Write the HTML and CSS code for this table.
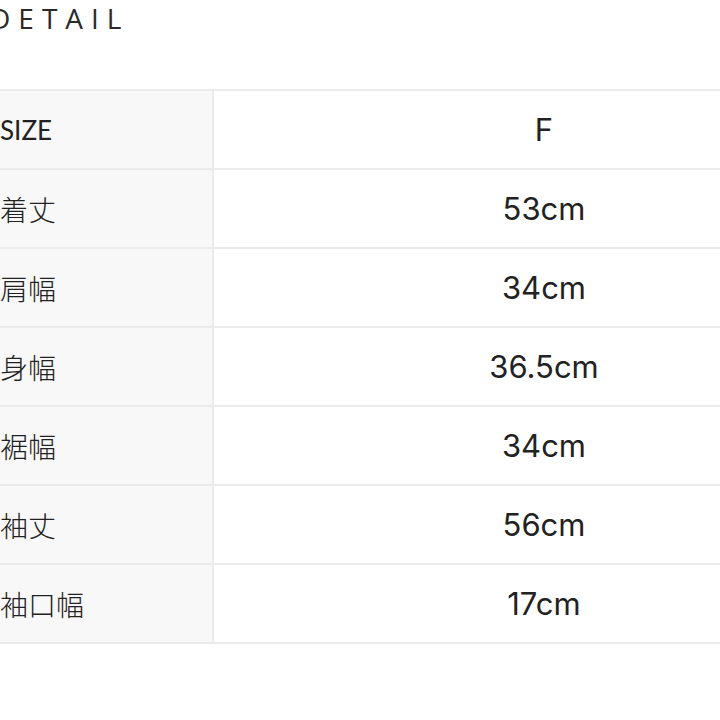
FILE: index.html
```html
<!DOCTYPE html>
<html lang="ja">
<head>
<meta charset="utf-8">
<link rel="stylesheet" href="styles.css">
</head>
<body>
<div class="page">
  <h2 class="title">DETAIL</h2>
  <table class="spec">
    <tbody>
      <tr><th>SIZE</th><td>F</td></tr>
      <tr><th><span class="ja">着丈</span></th><td>53cm</td></tr>
      <tr><th><span class="ja">肩幅</span></th><td>34cm</td></tr>
      <tr><th><span class="ja">身幅</span></th><td>36.5cm</td></tr>
      <tr><th><span class="ja">裾幅</span></th><td>34cm</td></tr>
      <tr><th><span class="ja">袖丈</span></th><td>56cm</td></tr>
      <tr><th><span class="ja">袖口幅</span></th><td>17cm</td></tr>
    </tbody>
  </table>
</div>
</body>
</html>
```

FILE: styles.css
```css
html, body {
  margin: 0;
  padding: 0;
  background: #ffffff;
  overflow: hidden;
  width: 720px;
  height: 720px;
}
.page {
  margin-left: -24px;
  width: 920px;
  color: #222222;
}
.title {
  margin: 0;
  padding: 1px 0 0 14px;
  font-family: "Open Sans", "Noto Sans", sans-serif;
  font-weight: 400;
  font-size: 28px;
  line-height: 34px;
  letter-spacing: 8px;
  color: #2a2a2a;
}
.spec {
  margin-top: 54px;
  border-collapse: collapse;
  table-layout: fixed;
  width: 900px;
  font-family: Inter, "Noto Sans CJK JP", sans-serif;
}
.spec th, .spec td {
  border: 2px solid #ebebeb;
  height: 77px;
  padding: 0;
  vertical-align: middle;
}
.spec th {
  width: 212px;
  padding-left: 22px;
  text-align: left;
  background: #f8f8f8;
  font-family: Lato, "Noto Sans CJK JP", sans-serif;
  font-weight: 400;
  font-size: 26px;
}
.spec th .ja {
  font-family: "Noto Sans CJK JP", sans-serif;
  font-size: 28px;
  font-weight: 300;
}
.spec td {
  text-align: center;
  font-size: 31px;
  font-weight: 400;
}
```
